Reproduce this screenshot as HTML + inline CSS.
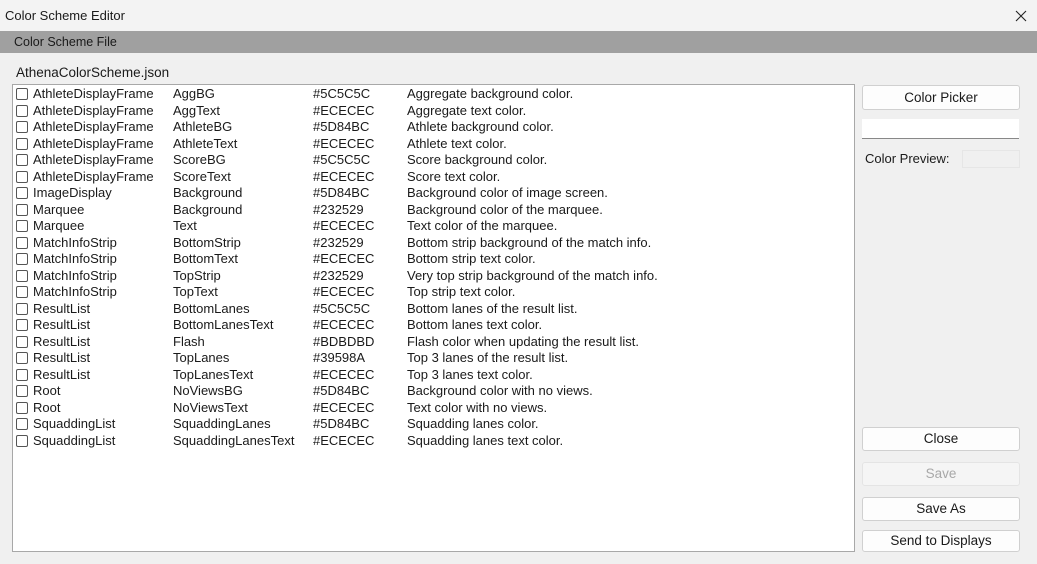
<!DOCTYPE html><html><head><style>
body{margin:0;width:1037px;height:564px;background:#f0f0f0;font-family:"Liberation Sans",sans-serif;font-size:13px;color:#1a1a1a;position:relative;overflow:hidden}
.a{position:absolute;white-space:nowrap}
.title{left:0;top:0;width:1037px;height:31px;background:#f3f3f3}
.band{left:0;top:31px;width:1037px;height:22px;background:#a0a0a0}
.list{left:12px;top:84px;width:841px;height:466px;background:#fff;border:1px solid #a8a8a8}
.row{position:absolute;left:0;height:16px;line-height:16px}
.cb{position:absolute;left:3px;top:2px;width:10px;height:10px;border:1px solid #555;border-radius:2px;background:#fff}
.btn{position:absolute;left:862px;width:156px;background:#fdfdfd;border:1px solid #d0d0d0;border-radius:3px;text-align:center;font-size:13.5px}
</style></head><body>
<div class="a title"></div>
<div class="a" style="left:5px;top:8px;font-size:13px">Color Scheme Editor</div>
<svg class="a" style="left:1015px;top:10px" width="12" height="12"><path d="M1 1L11 11M11 1L1 11" stroke="#222" stroke-width="1.1"/></svg>
<div class="a band"></div>
<div class="a" style="left:14px;top:35px;font-size:12.5px">Color Scheme File</div>
<div class="a" style="left:16px;top:65px;font-size:13.5px">AthenaColorScheme.json</div>
<div class="a list" id="l"></div>
<div class="btn" style="top:85px;height:23px;line-height:23px">Color Picker</div>
<div class="a" style="left:862px;top:119px;width:157px;height:19px;background:#fff;border-bottom:1px solid #888"></div>
<div class="a" style="left:865px;top:151px">Color Preview:</div>
<div class="a" style="left:962px;top:150px;width:56px;height:16px;background:#f0f0f0;border:1px solid #e6e6e6"></div>
<div class="btn" style="top:427px;height:22px;line-height:22px">Close</div>
<div class="btn" style="top:462px;height:22px;line-height:22px;color:#a8a8a8;background:#f5f5f5;border-color:#e4e4e4">Save</div>
<div class="btn" style="top:497px;height:22px;line-height:22px">Save As</div>
<div class="btn" style="top:530px;height:20px;line-height:20px">Send to Displays</div>
<script>
var d=[["AthleteDisplayFrame","AggBG","#5C5C5C","Aggregate background color."],["AthleteDisplayFrame","AggText","#ECECEC","Aggregate text color."],["AthleteDisplayFrame","AthleteBG","#5D84BC","Athlete background color."],["AthleteDisplayFrame","AthleteText","#ECECEC","Athlete text color."],["AthleteDisplayFrame","ScoreBG","#5C5C5C","Score background color."],["AthleteDisplayFrame","ScoreText","#ECECEC","Score text color."],["ImageDisplay","Background","#5D84BC","Background color of image screen."],["Marquee","Background","#232529","Background color of the marquee."],["Marquee","Text","#ECECEC","Text color of the marquee."],["MatchInfoStrip","BottomStrip","#232529","Bottom strip background of the match info."],["MatchInfoStrip","BottomText","#ECECEC","Bottom strip text color."],["MatchInfoStrip","TopStrip","#232529","Very top strip background of the match info."],["MatchInfoStrip","TopText","#ECECEC","Top strip text color."],["ResultList","BottomLanes","#5C5C5C","Bottom lanes of the result list."],["ResultList","BottomLanesText","#ECECEC","Bottom lanes text color."],["ResultList","Flash","#BDBDBD","Flash color when updating the result list."],["ResultList","TopLanes","#39598A","Top 3 lanes of the result list."],["ResultList","TopLanesText","#ECECEC","Top 3 lanes text color."],["Root","NoViewsBG","#5D84BC","Background color with no views."],["Root","NoViewsText","#ECECEC","Text color with no views."],["SquaddingList","SquaddingLanes","#5D84BC","Squadding lanes color."],["SquaddingList","SquaddingLanesText","#ECECEC","Squadding lanes text color."]];
var h="";d.forEach(function(r,i){var t=1+i*16.52;h+='<div class="row" style="top:'+t+'px;width:840px"><div class="cb"></div><span class="a" style="left:20px">'+r[0]+'</span><span class="a" style="left:160px">'+r[1]+'</span><span class="a" style="left:300px">'+r[2]+'</span><span class="a" style="left:394px">'+r[3]+'</span></div>';});
document.getElementById("l").innerHTML=h;
</script>
</body></html>
